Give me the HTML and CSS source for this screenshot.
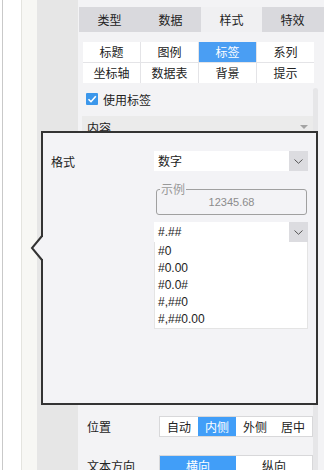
FILE: index.html
```html
<!DOCTYPE html>
<html lang="zh-CN">
<head>
  <meta charset="UTF-8" />
  <meta name="viewport" content="width=device-width, initial-scale=1.0"/>
  <title>标签样式</title>
  <link rel="stylesheet" href="styles.css">
</head>
<body>

<div class="app">
  <div class="rail rail-edge"></div>
  <div class="rail rail-white"></div>
  <div class="rail rail-light"></div>
  <div class="rail rail-gray"></div>

  <div class="panel">
    <div class="tabs">
      <div class="tab">类型</div>
      <div class="tab">数据</div>
      <div class="tab active">样式</div>
      <div class="tab">特效</div>
    </div>

    <div class="subtabs">
      <div class="subtab">标题</div>
      <div class="subtab">图例</div>
      <div class="subtab active">标签</div>
      <div class="subtab">系列</div>
      <div class="subtab">坐标轴</div>
      <div class="subtab">数据表</div>
      <div class="subtab">背景</div>
      <div class="subtab">提示</div>
    </div>

    <div class="scroll">
      <div class="scroll-body">
        <label class="check">
          <span class="box">
            <svg width="12" height="12" viewBox="0 0 12 12"><polyline points="2.5,6.2 5,8.7 9.8,3.3" fill="none" stroke="#fff" stroke-width="1.6"/></svg>
          </span>
          使用标签
        </label>

        <div class="section-head">
          <span>内容</span>
          <span class="caret"></span>
        </div>
        <div class="section-body"></div>

        <div class="row">
          <span class="row-label">位置</span>
          <div class="seg">
            <span>自动</span>
            <span class="on">内侧</span>
            <span>外侧</span>
            <span>居中</span>
          </div>
        </div>
        <div class="row">
          <span class="row-label">文本方向</span>
          <div class="seg">
            <span class="on">横向</span>
            <span>纵向</span>
          </div>
        </div>
      </div>
      <div class="scrollbar"></div>
    </div>
  </div>

  <div class="popup">
    <svg class="pointer" width="12" height="24" viewBox="0 0 12 24">
      <polygon points="11,1 1,12 11,23 12,23 12,1" fill="#f3f3f6"/>
      <polyline points="11,0 1,12 11,24" fill="none" stroke="#333" stroke-width="2"/>
    </svg>

    <div class="form-row">
      <div class="form-label">格式</div>
      <div class="controls">
        <div class="select">
          <span class="select-value">数字</span>
          <span class="select-arrow">
            <svg width="9" height="5" viewBox="0 0 9 5"><polyline points="0.5,0.5 4.5,4.3 8.5,0.5" fill="none" stroke="#555" stroke-width="1"/></svg>
          </span>
        </div>

        <fieldset class="sample">
          <legend>示例</legend>
          <div class="sample-value">12345.68</div>
        </fieldset>

        <div class="select pattern">
          <span class="select-value">#.##</span>
          <span class="select-arrow">
            <svg width="9" height="5" viewBox="0 0 9 5"><polyline points="0.5,0.5 4.5,4.3 8.5,0.5" fill="none" stroke="#555" stroke-width="1"/></svg>
          </span>
        </div>
        <ul class="options">
          <li>#0</li>
          <li>#0.00</li>
          <li>#0.0#</li>
          <li>#,##0</li>
          <li>#,##0.00</li>
        </ul>
      </div>
    </div>
  </div>
</div>

</body>
</html>
```

FILE: styles.css
```css
* {
  box-sizing: border-box;
}
html, body {
  margin: 0;
}
body {
  font-family: "Noto Sans CJK SC", "Liberation Sans", sans-serif;
  font-size: 12px;
  color: #222;
  background: #fff;
}
.app {
  display: flex;
  height: 470px;
  position: relative;
  overflow: hidden;
}

/* left rails */
.rail-edge {
  width: 3px;
  background: #fff;
  border-right: 1px solid #c9c9c9;
}
.rail-white {
  width: 19px;
  background: #fff;
  border-right: 1px solid #e4e4df;
}
.rail-light {
  width: 15px;
  background: #f7f7f4;
}
.rail-gray {
  width: 41px;
  background: #e6e6e6;
}

/* right panel */
.panel {
  flex: 1;
  display: flex;
  flex-direction: column;
  background: #f3f3f5;
  padding-top: 7px;
}
.tabs {
  display: grid;
  grid-template-columns: repeat(4, 61px);
  margin-left: 1px;
  height: 25px;
  background: #d9d9dd;
}
.tab {
  line-height: 25px;
  text-align: center;
}
.tab.active {
  background: #f0f0f2;
}
.subtabs {
  display: grid;
  grid-template-columns: repeat(4, 1fr);
  gap: 1px;
  width: 231px;
  margin: 10px 0 0 5px;
  background: #e4e4e7;
}
.subtab {
  height: 20px;
  line-height: 20px;
  text-align: center;
  background: #fff;
}
.subtab.active {
  background: #4a9ef3;
  color: #fff;
}

.scroll {
  flex: 1;
  display: flex;
  margin-top: 5px;
}
.scroll-body {
  width: 235px;
}
.scrollbar {
  width: 5px;
  background: #e6e6e8;
  border-radius: 3px 3px 0 0;
}
.check {
  display: flex;
  align-items: center;
  gap: 5px;
  height: 12px;
  margin: 5px 0 0 8px;
}
.box {
  width: 12px;
  height: 12px;
  background: #3b97eb;
  border-radius: 1px;
  display: flex;
}
.section-head {
  display: flex;
  justify-content: space-between;
  align-items: center;
  height: 22px;
  margin: 11px 0 0 4px;
  padding: 0 5px;
  background: #ebebeb;
}
.caret {
  width: 0;
  height: 0;
  border-left: 4px solid transparent;
  border-right: 4px solid transparent;
  border-top: 4px solid #a3a3a3;
}
.section-body {
  height: 278px;
}
.row {
  display: flex;
  align-items: center;
  padding-left: 9px;
  height: 21px;
  margin-bottom: 18px;
}
.row-label {
  width: 72px;
}
.seg {
  display: flex;
  width: 154px;
  height: 21px;
  background: #fff;
  border: 1px solid #d8d8da;
}
.seg span {
  flex: 1;
  line-height: 19px;
  text-align: center;
}
.seg span.on {
  background: #419ef8;
  color: #fff;
}

/* format popup */
.popup {
  position: absolute;
  left: 41px;
  top: 131px;
  width: 277px;
  height: 274px;
  border: 2px solid #333;
  background: #f3f3f6;
  padding: 18px 8px 0;
}
.pointer {
  position: absolute;
  left: -12px;
  top: 103px;
  overflow: visible;
}
.form-row {
  display: flex;
}
.form-label {
  width: 103px;
  line-height: 21px;
}
.controls {
  width: 154px;
}
.select {
  display: flex;
  height: 20px;
  background: #fff;
}
.select-value {
  flex: 1;
  padding-left: 4px;
  line-height: 20px;
}
.select.pattern {
  margin-top: 7px;
  font-family: "Liberation Sans", sans-serif;
}
.select-arrow {
  width: 19px;
  display: flex;
  align-items: center;
  justify-content: center;
  background: #dcdce0;
}
.sample {
  margin: 12px 1px 0 2px;
  padding: 0 0 5px;
  border: 1px solid #a0a0a0;
  border-radius: 3px;
}
.sample legend {
  margin-left: 3px;
  padding: 0 1px;
  line-height: 12px;
  color: #999;
}
.sample-value {
  text-align: center;
  font-family: "Liberation Sans", sans-serif;
  font-size: 11px;
  line-height: 14px;
  color: #8c8c8c;
}
.options {
  list-style: none;
  margin: 0;
  padding: 1px 0 0;
  background: #fff;
  border: 1px solid #e4e4e4;
  border-top: none;
  font-family: "Liberation Sans", sans-serif;
}
.options li {
  height: 17px;
  line-height: 17px;
  padding-left: 3px;
}
```
